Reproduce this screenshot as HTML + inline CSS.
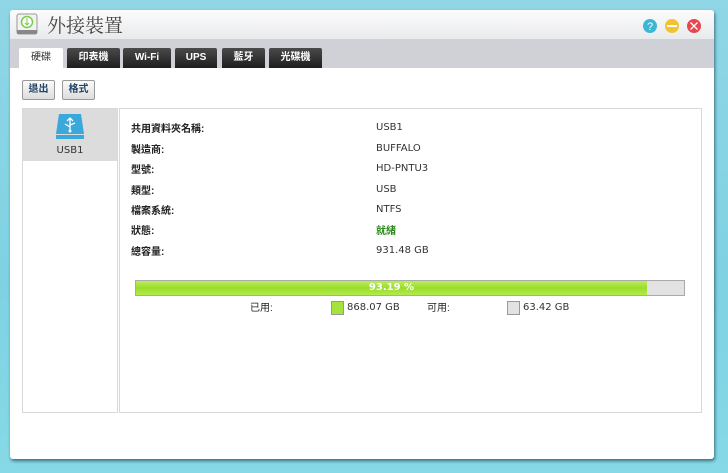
<!DOCTYPE html>
<html><head><meta charset="utf-8"><style>
*{margin:0;padding:0;box-sizing:border-box}
body{width:728px;height:473px;overflow:hidden;background:linear-gradient(180deg,#8fd6e6 0%,#7fd2e2 60%,#86d9e6 100%);font-family:"Liberation Sans","Noto Sans CJK TC",sans-serif;font-size:10px;color:#222;position:relative}
.win{position:absolute;left:10px;top:10px;width:704px;height:449px;background:#fff;border-radius:3px;box-shadow:1px 2px 3px rgba(0,40,60,.6)}
.title{height:29px;background:linear-gradient(#fcfcfc,#e9eaed);border-radius:3px 3px 0 0;position:relative}
.title .t{position:absolute;left:37px;top:1px;font-size:19px;font-family:"Noto Serif CJK SC","Liberation Serif",serif;color:#444}
.tabs{height:29px;background:#cfd1d7;position:relative}
.tab{position:absolute;top:9px;height:20px;background:linear-gradient(#4a4a4a,#1e1e1e);color:#fff;font-size:10px;font-weight:bold;text-align:center;line-height:20px;border-radius:2px 2px 0 0}
.tab.a{background:#fff;color:#333;font-weight:normal}
.btn{position:absolute;top:80px;height:20px;border:1px solid #999;border-radius:2px;background:linear-gradient(#fafafa,#ddd);font-size:10px;color:#246;font-weight:bold;line-height:18px;text-align:center}
.lp{position:absolute;left:22px;top:108px;width:96px;height:305px;border:1px solid #d8d8d8}
.sel{height:52px;background:#dcdcdc;text-align:center}
.rp{position:absolute;left:119px;top:108px;width:583px;height:305px;border:1px solid #d8d8d8}
.r{position:absolute;font-size:10px;line-height:12px;height:12px}
.v{font-family:"DejaVu Sans","Noto Sans CJK TC",sans-serif;font-size:10px;color:#333}
.bar{position:absolute;left:135px;top:280px;width:550px;height:16px;border:1px solid #aaa;background:#e2e2e2}
.fill{width:511px;height:14px;background:linear-gradient(#b9ee5a,#9bdc2c 50%,#b2ec4d);color:#fff;font-weight:bold;text-align:center;line-height:14px;font-size:10px;font-family:"DejaVu Sans",sans-serif}
.sw{position:absolute;top:301px;width:13px;height:14px;border:1px solid #999}
</style></head><body>
<div class="win">
<div class="title">
<svg style="position:absolute;left:6px;top:3px" width="22" height="22" viewBox="0 0 22 22"><rect x="1" y="1" width="20" height="20" rx="2" fill="#f2f2f2" stroke="#999"/><rect x="1" y="17" width="20" height="4" fill="#888"/><circle cx="11" cy="9" r="5.5" fill="#fff" stroke="#7c4" stroke-width="1.5"/><path d="M11 5v7M9 10l2 2 2-2" stroke="#7c4" fill="none"/></svg>
<div class="t">外接裝置</div>
<svg style="position:absolute;left:633px;top:8px" width="64" height="16"><circle cx="7" cy="8" r="7" fill="#3bb7d4"/><text x="7" y="12" font-size="11" fill="#fff" text-anchor="middle" font-family="Liberation Sans">?</text><circle cx="29" cy="8" r="7" fill="#f2c230"/><rect x="24" y="7" width="10" height="2" fill="#fff"/><circle cx="51" cy="8" r="7" fill="#e8464f"/><path d="M47.5 4.5l7 7M54.5 4.5l-7 7" stroke="#fff" stroke-width="1.3"/></svg>
</div>
<div class="tabs">
<div class="tab a" style="left:9px;width:44px">硬碟</div>
<div class="tab" style="left:57px;width:53px">印表機</div>
<div class="tab" style="left:113px;width:48px">Wi-Fi</div>
<div class="tab" style="left:165px;width:42px">UPS</div>
<div class="tab" style="left:212px;width:43px">藍牙</div>
<div class="tab" style="left:259px;width:53px">光碟機</div>
</div>
</div>
<div class="btn" style="left:22px;width:33px">退出</div>
<div class="btn" style="left:62px;width:33px">格式</div>
<div class="lp"><div class="sel">
<svg style="margin-top:5px" width="30" height="28" viewBox="0 0 30 28"><path d="M4 0h22l3 20H1z" fill="#3aa8da"/><rect x="1" y="21" width="28" height="4" fill="#3aa8da"/><path d="M15 4v13M12 7l3-3 3 3M15 13l-5-3M15 11l5-2" stroke="#fff" stroke-width="1.3" fill="none"/><circle cx="15" cy="17" r="1.5" fill="#fff"/></svg>
<div class="v" style="margin-top:0">USB1</div></div></div>
<div class="rp"></div>
<div class="r" style="left:131px;top:124px;font-weight:bold">共用資料夾名稱:</div><div class="r v" style="left:376px;top:122px">USB1</div>
<div class="r" style="left:131px;top:145px;font-weight:bold">製造商:</div><div class="r v" style="left:376px;top:143px">BUFFALO</div>
<div class="r" style="left:131px;top:165px;font-weight:bold">型號:</div><div class="r v" style="left:376px;top:163px">HD-PNTU3</div>
<div class="r" style="left:131px;top:186px;font-weight:bold">類型:</div><div class="r v" style="left:376px;top:184px">USB</div>
<div class="r" style="left:131px;top:206px;font-weight:bold">檔案系統:</div><div class="r v" style="left:376px;top:204px">NTFS</div>
<div class="r" style="left:131px;top:226px;font-weight:bold">狀態:</div><div class="r" style="left:376px;top:226px;color:#2a8a1a;font-weight:bold">就緒</div>
<div class="r" style="left:131px;top:247px;font-weight:bold">總容量:</div><div class="r v" style="left:376px;top:245px">931.48 GB</div>
<div class="bar"><div class="fill">93.19 %</div></div>
<div class="r" style="left:250px;top:303px">已用:</div>
<div class="sw" style="left:331px;background:#a6e23c"></div><div class="r v" style="left:347px;top:302px">868.07 GB</div>
<div class="r" style="left:427px;top:303px">可用:</div>
<div class="sw" style="left:507px;background:#e2e2e2"></div><div class="r v" style="left:523px;top:302px">63.42 GB</div>
</body></html>
